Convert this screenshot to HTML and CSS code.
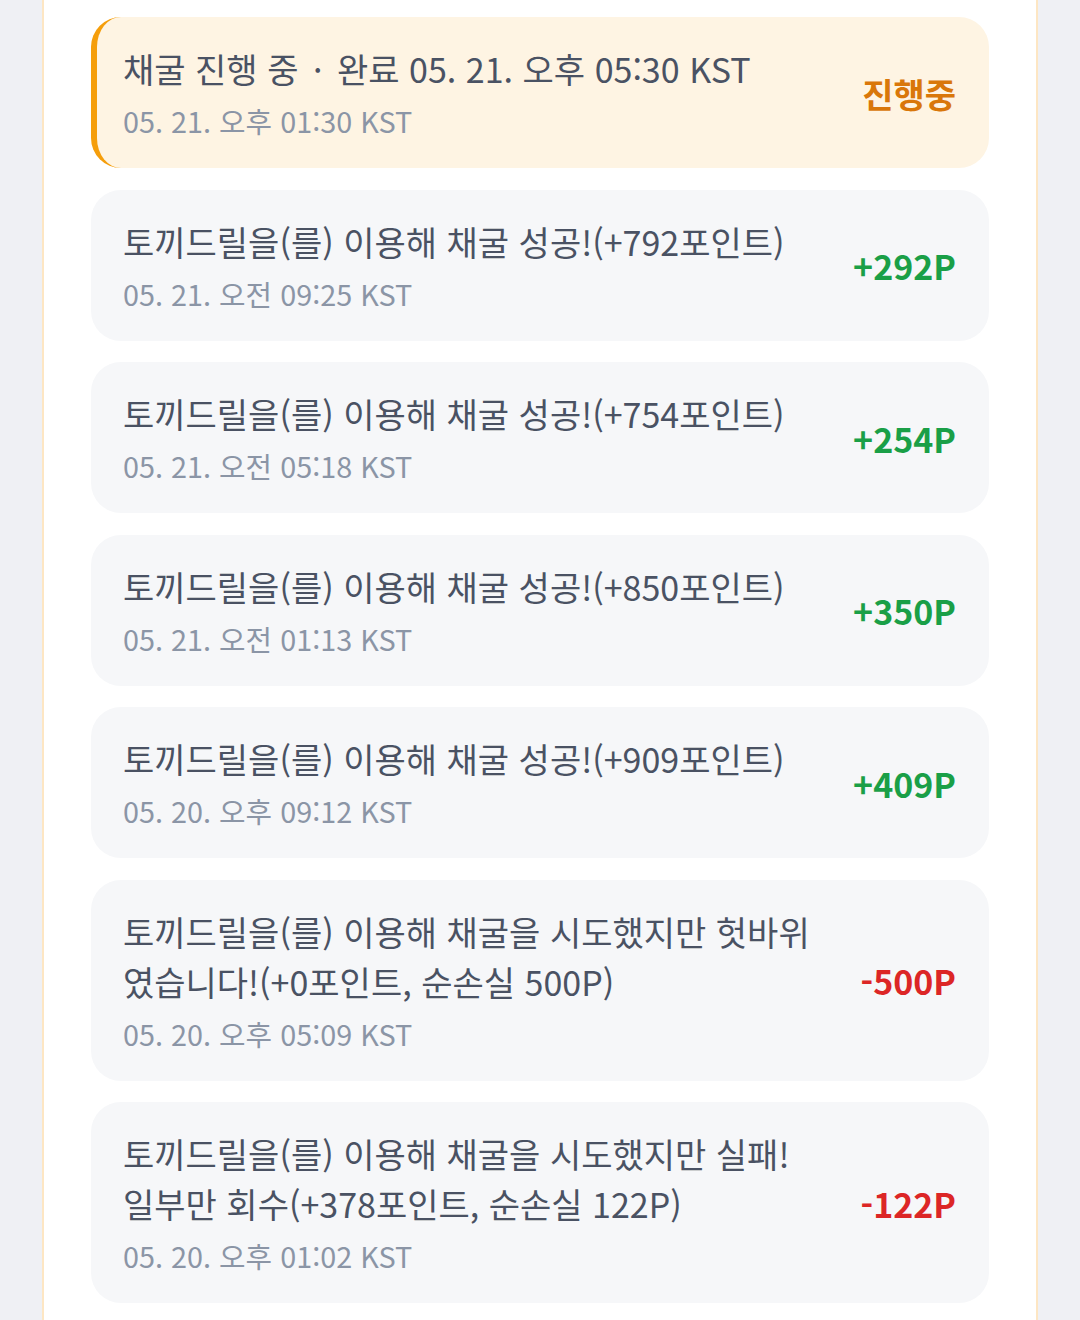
FILE: index.html
```html
<!DOCTYPE html>
<html lang="ko">
<head>
    <meta charset="UTF-8">
    <meta name="viewport" content="width=device-width, initial-scale=1.0">
    <title>채굴 기록</title>
    <link rel="stylesheet" href="styles.css">
</head>
<body>
    <div class="panel">
        <ul class="log-list">
            <li class="log-item active">
                <div class="log-text">
                    <div class="log-title">채굴 진행 중 <span class="sep">·</span> 완료 05. 21. 오후 05:30 KST</div>
                    <div class="log-date">05. 21. 오후 01:30 KST</div>
                </div>
                <div class="log-amount pending">진행중</div>
            </li>
            <li class="log-item">
                <div class="log-text">
                    <div class="log-title">토끼드릴을(를) 이용해 채굴 성공!(+792포인트)</div>
                    <div class="log-date">05. 21. 오전 09:25 KST</div>
                </div>
                <div class="log-amount plus">+292P</div>
            </li>
            <li class="log-item">
                <div class="log-text">
                    <div class="log-title">토끼드릴을(를) 이용해 채굴 성공!(+754포인트)</div>
                    <div class="log-date">05. 21. 오전 05:18 KST</div>
                </div>
                <div class="log-amount plus">+254P</div>
            </li>
            <li class="log-item">
                <div class="log-text">
                    <div class="log-title">토끼드릴을(를) 이용해 채굴 성공!(+850포인트)</div>
                    <div class="log-date">05. 21. 오전 01:13 KST</div>
                </div>
                <div class="log-amount plus">+350P</div>
            </li>
            <li class="log-item">
                <div class="log-text">
                    <div class="log-title">토끼드릴을(를) 이용해 채굴 성공!(+909포인트)</div>
                    <div class="log-date">05. 20. 오후 09:12 KST</div>
                </div>
                <div class="log-amount plus">+409P</div>
            </li>
            <li class="log-item">
                <div class="log-text">
                    <div class="log-title">토끼드릴을(를) 이용해 채굴을 시도했지만 헛바위였습니다!(+0포인트, 순손실 500P)</div>
                    <div class="log-date">05. 20. 오후 05:09 KST</div>
                </div>
                <div class="log-amount minus">-500P</div>
            </li>
            <li class="log-item">
                <div class="log-text">
                    <div class="log-title">토끼드릴을(를) 이용해 채굴을 시도했지만 실패! 일부만 회수(+378포인트, 순손실 122P)</div>
                    <div class="log-date">05. 20. 오후 01:02 KST</div>
                </div>
                <div class="log-amount minus">-122P</div>
            </li>
        </ul>
    </div>
</body>
</html>
```

FILE: styles.css
```css
:root {
    --page-bg: #eff0f4;
    --panel-border: #fde6c3;
    --item-bg: #f6f7f9;
    --title: #4a5263;
    --date: #8b95a6;
    --green: #1a9f47;
    --red: #dc2626;
    --orange: #d9770a;
}

body {
    margin: 0;
    background: var(--page-bg);
    font-family: "Noto Sans CJK KR", "Noto Sans", sans-serif;
}

.panel {
    box-sizing: border-box;
    width: 996px;
    min-height: 1320px;
    margin-left: 42px;
    background: #fff;
    border-left: 2px solid var(--panel-border);
    border-right: 2px solid var(--panel-border);
    padding: 17px 47px 40px;
}

.log-list {
    list-style: none;
    margin: 0;
    padding: 0;
    display: flex;
    flex-direction: column;
    gap: 21.5px;
}

.log-item {
    display: flex;
    align-items: center;
    gap: 40px;
    background: var(--item-bg);
    border-radius: 30px;
    padding: 27px 33px 26px 32px;
}

.log-item.active {
    background: #fef4e3;
    border-left: 6px solid #f59e0b;
    padding-left: 26px;
}

.log-text {
    flex: 1;
    min-width: 0;
}

.log-title {
    font-size: 34px;
    line-height: 50px;
    color: var(--title);
}

.log-title .sep {
    margin: 0 5px;
}

.log-date {
    margin-top: 6px;
    font-size: 28.8px;
    line-height: 42px;
    color: var(--date);
}

.log-amount {
    flex-shrink: 0;
    font-size: 34px;
    font-weight: 700;
}

.log-amount.plus { color: var(--green); }
.log-amount.minus { color: var(--red); }
.log-amount.pending { color: var(--orange); }
```
